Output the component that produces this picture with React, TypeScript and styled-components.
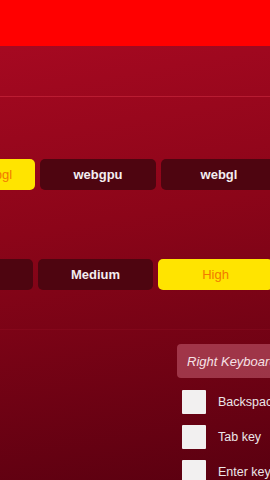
import styled, { createGlobalStyle } from "styled-components";

const GlobalStyle = createGlobalStyle`
  html, body {
    margin: 0;
    padding: 0;
    overflow: hidden;
    font-family: "Liberation Sans", Arial, sans-serif;
  }
`;

const backends = ["angle-webgl", "webgpu", "webgl"];
const qualities = ["Low", "Medium", "High"];
const keys = ["Backspace", "Tab key", "Enter key"];

const App = () => {
  return (
    <>
      <GlobalStyle />
      <Page>
        <Header />
        <TopSection />

        <OptionRow $cell={116} $shift={81} $top={62}>
          {backends.map((b, i) => (
            <Option key={b} $active={i === 0}>
              {b}
            </Option>
          ))}
        </OptionRow>

        <OptionRow $cell={115} $shift={82} $top={69}>
          {qualities.map((q) => (
            <Option key={q} $active={q === "High"}>
              {q}
            </Option>
          ))}
        </OptionRow>

        <Divider />

        <KeyboardPanel>
          <PanelTitle>Right Keyboard</PanelTitle>
          {keys.map((k) => (
            <KeyRow key={k}>
              <Check />
              <KeyLabel>{k}</KeyLabel>
            </KeyRow>
          ))}
        </KeyboardPanel>
      </Page>
    </>
  );
};

export default App;

const Page = styled.div`
  width: 270px;
  height: 480px;
  overflow: hidden;
  background: linear-gradient(170deg, #ac0a23 0%, #8c0519 45%, #5a0010 100%);
`;

const Header = styled.div`
  height: 46px;
  background: #ff0000;
`;

const TopSection = styled.div`
  height: 50px;
  border-bottom: 1px solid rgba(255, 80, 100, 0.3);
`;

const OptionRow = styled.div<{ $cell: number; $shift: number; $top: number }>`
  display: grid;
  grid-template-columns: repeat(3, ${(p) => p.$cell}px);
  gap: 5px;
  margin-left: -${(p) => p.$shift}px;
  margin-top: ${(p) => p.$top}px;
`;

const Option = styled.div<{ $active?: boolean }>`
  height: 31px;
  border-radius: 5px;
  display: flex;
  align-items: center;
  justify-content: center;
  font-size: 13px;
  white-space: nowrap;
  background: ${(p) => (p.$active ? "#ffe400" : "#4e0510")};
  color: ${(p) => (p.$active ? "#f27a00" : "#f4eef0")};
  font-weight: ${(p) => (p.$active ? "normal" : "bold")};
`;

const Divider = styled.div`
  margin-top: 39px;
  height: 1px;
  background: rgba(255, 60, 90, 0.08);
`;

const KeyboardPanel = styled.div`
  margin-left: 177px;
  margin-top: 14px;
  display: flex;
  flex-direction: column;
`;

const PanelTitle = styled.div`
  height: 34px;
  width: 120px;
  border-radius: 4px;
  background: rgba(230, 130, 150, 0.4);
  color: #f6e2e6;
  font-style: italic;
  font-size: 13px;
  display: flex;
  align-items: center;
  padding-left: 10px;
  white-space: nowrap;
  margin-bottom: 12px;
`;

const KeyRow = styled.div`
  display: flex;
  align-items: center;
  gap: 12px;
  height: 24px;
  margin-bottom: 11px;
  padding-left: 5px;
`;

const Check = styled.div`
  width: 24px;
  height: 24px;
  flex: none;
  background: #f2f0f0;
  border-radius: 1px;
`;

const KeyLabel = styled.span`
  color: #ece6e8;
  font-size: 12.5px;
  white-space: nowrap;
`;
